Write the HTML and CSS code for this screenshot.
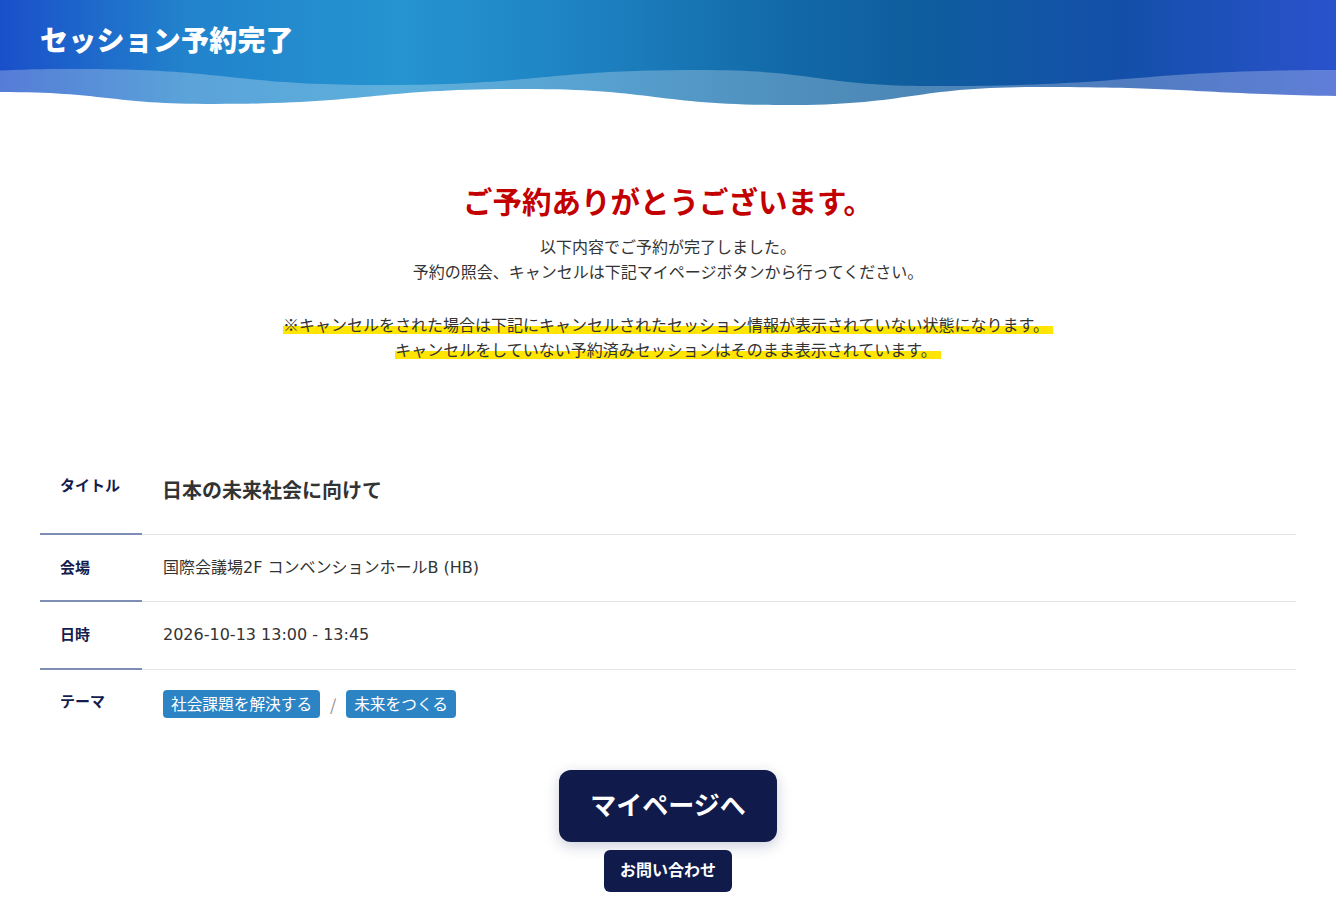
FILE: index.html
```html
<!DOCTYPE html>
<html lang="ja">
<head>
<meta charset="utf-8">
<title>セッション予約完了</title>
<link rel="stylesheet" href="styles.css">
</head>
<body>
<header class="hero">
  <h1 class="hero-title">セッション予約完了</h1>
  <svg class="hero-wave" viewBox="0 0 1336 110" preserveAspectRatio="none" aria-hidden="true">
    <path d="M0,70.5 C40,69 40,69 80,69 C230,69 230,85 380,85 C540,85 540,70 700,70 C818,70 818,86 936,86 C1136,86 1136,70 1336,70 L1336,110 L0,110 Z" fill="rgba(255,255,255,0.26)"/>
    <path d="M0,92 C107,92 107,104 215,104 C370,104 370,89 525,89 C655,89 655,105 786,105 C911,105 911,87 1036,87 C1186,87 1186,93 1336,96 L1336,110 L0,110 Z" fill="#ffffff"/>
  </svg>
</header>

<main class="main">
  <section class="thanks">
    <h2 class="thanks-title">ご予約ありがとうございます。</h2>
    <p class="thanks-text">以下内容でご予約が完了しました。<br>予約の照会、キャンセルは下記マイページボタンから行ってください。</p>
    <p class="thanks-text"><span class="marker">※キャンセルをされた場合は下記にキャンセルされたセッション情報が表示されていない状態になります。</span><br><span class="marker">キャンセルをしていない予約済みセッションはそのまま表示されています。</span></p>
  </section>

  <section class="detail">
    <div class="row row-title">
      <div class="label">タイトル</div>
      <div class="value value-title">日本の未来社会に向けて</div>
    </div>
    <div class="row">
      <div class="label">会場</div>
      <div class="value">国際会議場2F コンベンションホールB (HB)</div>
    </div>
    <div class="row row-date">
      <div class="label">日時</div>
      <div class="value">2026-10-13 13:00 - 13:45</div>
    </div>
    <div class="row row-last">
      <div class="label">テーマ</div>
      <div class="value tags">
        <span class="tag">社会課題を解決する</span>
        <span class="sep">/</span>
        <span class="tag">未来をつくる</span>
      </div>
    </div>
  </section>

  <div class="actions">
    <a class="btn-primary" href="#">マイページへ</a>
    <a class="btn-secondary" href="#">お問い合わせ</a>
  </div>
</main>
</body>
</html>
```

FILE: styles.css
```css
* { box-sizing: border-box; }

html, body {
  margin: 0;
  padding: 0;
  background: #ffffff;
}

body {
  font-family: "Noto Sans CJK JP", "Inter", sans-serif;
  color: #333333;
}

.hero {
  position: relative;
  height: 110px;
  background: linear-gradient(90deg, #1a4fca 0%, #2283cc 14%, #2594d0 30%, #1d80c0 45%, #136aa8 58%, #0f5e9e 68%, #134fa9 84%, #2a52cc 100%);
  overflow: hidden;
}

.hero-title {
  margin: 0;
  padding: 21px 0 0 40px;
  font-size: 28px;
  line-height: 36px;
  font-weight: 900;
  color: #ffffff;
  letter-spacing: 0.2px;
  position: relative;
  z-index: 1;
}

.hero-wave {
  position: absolute;
  left: 0;
  top: 0;
  width: 100%;
  height: 110px;
  display: block;
}

.main {
  padding: 0 40px 40px;
}

.thanks {
  text-align: center;
  padding-top: 70px;
}

.thanks-title {
  margin: 0;
  font-size: 29.5px;
  line-height: 40px;
  font-weight: 700;
  color: #c20000;
}

.thanks-text {
  margin: 14px 0 0;
  font-size: 16px;
  line-height: 25px;
  color: #333333;
}

.thanks-text + .thanks-text {
  margin-top: 28px;
}

.marker {
  background: linear-gradient(transparent 58%, #ffe500 58%, #ffe500 90%, transparent 90%);
  padding: 0 4px 0 0;
}

.detail {
  margin-top: 84px;
}

.row {
  display: flex;
  align-items: stretch;
}

.label {
  width: 102px;
  flex: none;
  padding: 21px 0 0 20px;
  font-size: 15px;
  line-height: 22px;
  font-weight: 700;
  color: #141d4d;
  border-bottom: 2px solid #7d8db4;
}

.value {
  flex: 1;
  padding: 22px 0 22px 21px;
  font-family: "DejaVu Sans", "Noto Sans CJK JP", sans-serif;
  font-size: 16px;
  line-height: 22px;
  color: #333333;
  border-bottom: 1px solid #e4e4e4;
}

.row-date .value {
  padding-bottom: 23px;
}

.row-title .label {
  padding-top: 28px;
}

.row-title .value {
  padding: 30px 0 30px 20px;
  line-height: 28px;
}

.value-title {
  font-family: "Noto Sans CJK JP", sans-serif;
  font-size: 20px;
  font-weight: 700;
  color: #333333;
}

.row-last .label,
.row-last .value {
  border-bottom: none;
}

.row-last .label {
  padding-top: 20px;
}

.row-last .value {
  padding-top: 20px;
  padding-bottom: 21px;
}

.tags {
  display: flex;
  align-items: center;
  gap: 0;
}

.tag {
  display: inline-block;
  height: 28px;
  line-height: 28px;
  padding: 0 8px;
  background: #2d84c4;
  color: #ffffff;
  font-family: "Noto Sans CJK JP", sans-serif;
  font-size: 15.7px;
  border-radius: 4px;
}

.sep {
  display: inline-block;
  width: 26px;
  text-align: center;
  color: #8a8a8a;
  font-family: "Noto Sans CJK JP", sans-serif;
  font-size: 16px;
}

.actions {
  margin-top: 31px;
  display: flex;
  flex-direction: column;
  align-items: center;
  gap: 8px;
}

.btn-primary {
  display: flex;
  align-items: center;
  justify-content: center;
  width: 218px;
  height: 72px;
  padding-bottom: 5px;
  background: #101a4b;
  color: #ffffff;
  font-size: 26px;
  line-height: 1.2;
  font-weight: 700;
  text-decoration: none;
  border-radius: 12px;
  box-shadow: 0 4px 14px rgba(20, 30, 90, 0.22);
}

.btn-secondary {
  display: flex;
  align-items: center;
  justify-content: center;
  width: 128px;
  height: 42px;
  padding-bottom: 3px;
  background: #101a4b;
  color: #ffffff;
  font-size: 16px;
  line-height: 1.2;
  font-weight: 700;
  text-decoration: none;
  border-radius: 6px;
}
```
